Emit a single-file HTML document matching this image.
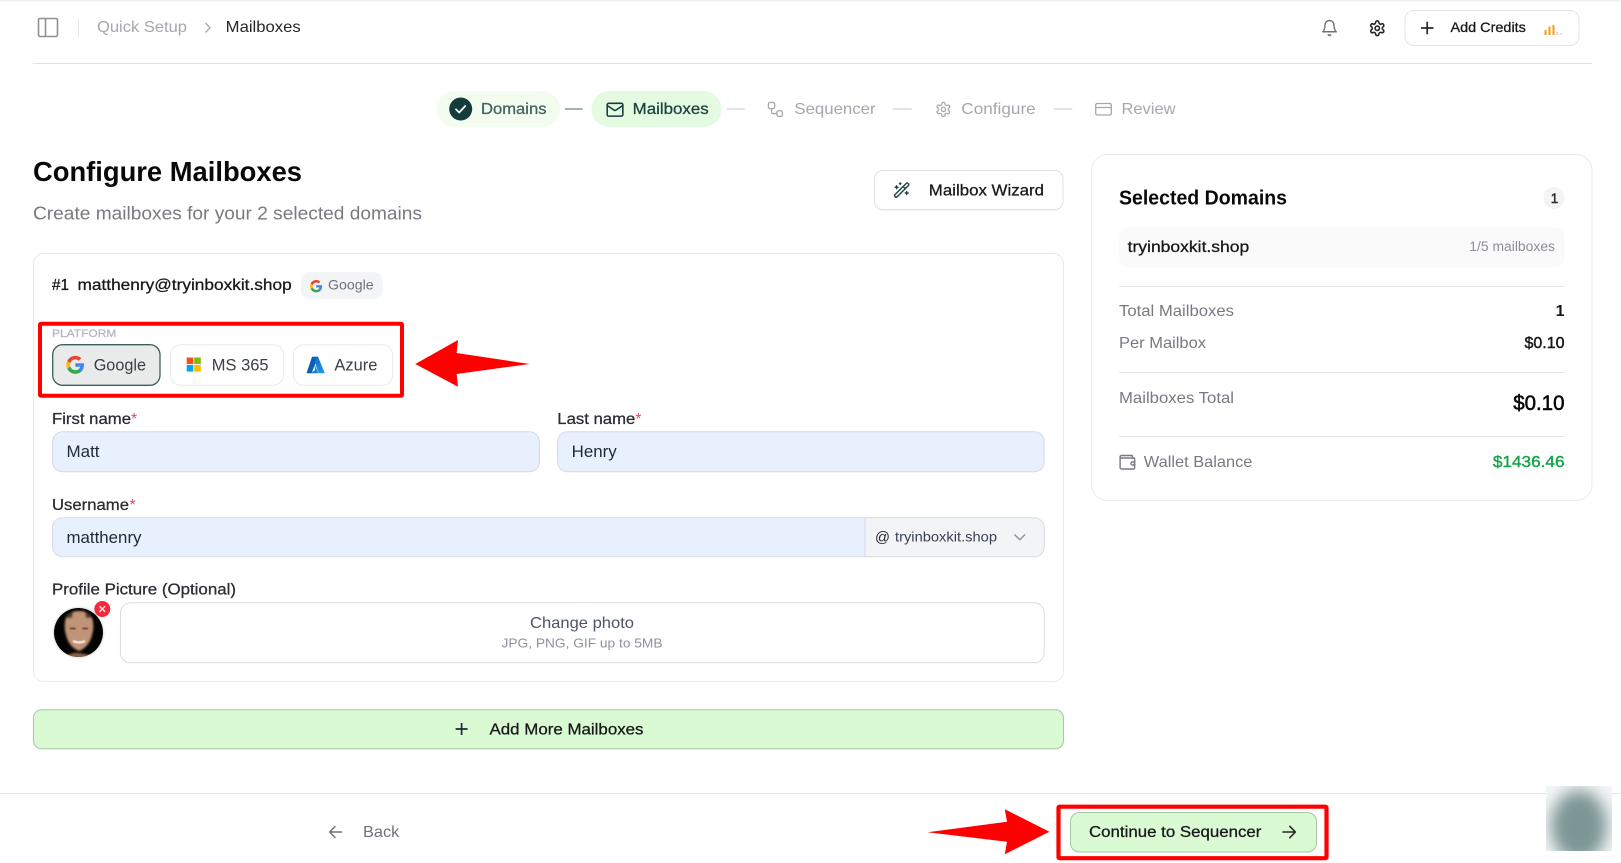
<!DOCTYPE html>
<html><head><meta charset="utf-8"><style>
html,body{margin:0;padding:0;background:#fff;width:1621px;height:863px;overflow:hidden}
svg{display:block;filter:blur(.3px)}
text{font-family:"Liberation Sans",Arial,sans-serif;font-size:16px;fill:#27272a}
.m{stroke:currentColor;stroke-width:.28px}
.b{font-weight:700}
.i{fill:none;stroke-linecap:round;stroke-linejoin:round;stroke-width:2}
</style></head><body>
<svg width="1621" height="863" viewBox="0 0 1621 863" xmlns="http://www.w3.org/2000/svg">
<defs>
<filter id="bl" x="-60%" y="-60%" width="220%" height="220%"><feGaussianBlur stdDeviation="8"/></filter>
<filter id="av" x="-20%" y="-20%" width="140%" height="140%"><feGaussianBlur stdDeviation="1"/></filter>
<filter id="av2" x="-20%" y="-20%" width="140%" height="140%"><feGaussianBlur stdDeviation=".5"/></filter>
<clipPath id="avc"><circle cx="78.5" cy="632.5" r="24.5"/></clipPath>
<clipPath id="blc"><rect x="1546" y="786" width="66" height="65"/></clipPath>
<linearGradient id="az" x1="0" y1="0" x2="0" y2="1"><stop offset="0" stop-color="#0f6cc0"/><stop offset="1" stop-color="#1f9be8"/></linearGradient>
<g id="gg"><path fill="#4285F4" d="M22.56 12.25c0-.78-.07-1.53-.2-2.25H12v4.26h5.92c-.26 1.37-1.04 2.53-2.21 3.31v2.77h3.57c2.08-1.92 3.28-4.74 3.28-8.09z"/><path fill="#34A853" d="M12 23c2.97 0 5.46-.98 7.28-2.66l-3.57-2.77c-.98.66-2.23 1.06-3.71 1.06-2.86 0-5.29-1.93-6.16-4.53H2.18v2.84C3.99 20.53 7.7 23 12 23z"/><path fill="#FBBC05" d="M5.84 14.09c-.22-.66-.35-1.36-.35-2.09s.13-1.43.35-2.09V7.07H2.18C1.43 8.55 1 10.22 1 12s.43 3.45 1.18 4.93l3.66-2.84z"/><path fill="#EA4335" d="M12 5.38c1.62 0 3.06.56 4.21 1.64l3.15-3.15C17.45 2.09 14.97 1 12 1 7.7 1 3.99 3.47 2.18 7.07l3.66 2.84c.87-2.6 3.3-4.53 6.16-4.53z"/></g>
<g id="set"><path d="M12.22 2h-.44a2 2 0 0 0-2 2v.18a2 2 0 0 1-1 1.73l-.43.25a2 2 0 0 1-2 0l-.15-.08a2 2 0 0 0-2.73.73l-.22.38a2 2 0 0 0 .73 2.73l.15.1a2 2 0 0 1 1 1.72v.51a2 2 0 0 1-1 1.74l-.15.09a2 2 0 0 0-.73 2.73l.22.38a2 2 0 0 0 2.73.73l.15-.08a2 2 0 0 1 2 0l.43.25a2 2 0 0 1 1 1.73V20a2 2 0 0 0 2 2h.44a2 2 0 0 0 2-2v-.18a2 2 0 0 1 1-1.73l.43-.25a2 2 0 0 1 2 0l.15.08a2 2 0 0 0 2.73-.73l.22-.39a2 2 0 0 0-.73-2.73l-.15-.08a2 2 0 0 1-1-1.74v-.5a2 2 0 0 1 1-1.74l.15-.09a2 2 0 0 0 .73-2.73l-.22-.38a2 2 0 0 0-2.73-.73l-.15.08a2 2 0 0 1-2 0l-.43-.25a2 2 0 0 1-1-1.73V4a2 2 0 0 0-2-2z"/><circle cx="12" cy="12" r="3"/></g>
</defs>

<!-- header -->
<rect x="0" y="0" width="1621" height="1.5" fill="#f1f1f3"/>
<rect x="38.500" y="18.500" width="19" height="18" rx="1.500" fill="none" stroke="#8f9098" stroke-width="1.600"/>
<line x1="45.500" y1="18.500" x2="45.500" y2="36.500" stroke="#8f9098" stroke-width="1.600"/>
<rect x="78" y="19" width="1" height="18" fill="#e4e4e7"/>
<text x="97" y="32" textLength="90" lengthAdjust="spacingAndGlyphs" style="fill:#a6a6ae">Quick Setup</text>
<path d="M205.500 23l4.500 4.800-4.500 4.800" fill="none" stroke="#a6a6ae" stroke-width="1.300"/>
<text x="225.700" y="32" textLength="75" lengthAdjust="spacingAndGlyphs" style="fill:#27272a">Mailboxes</text>
<rect x="33" y="63" width="1559" height="1" fill="#e4e4e7"/>

<g transform="translate(1320.500,19) scale(.75)" class="i" stroke="#71717a" style="stroke-width:1.900"><path d="M6 8a6 6 0 0 1 12 0c0 7 3 9 3 9H3s3-2 3-9"/><path d="M10.300 21a1.940 1.940 0 0 0 3.400 0"/></g>
<g transform="translate(1368.500,19.500) scale(.73)" class="i" stroke="#27272a" style="stroke-width:2.200"><use href="#set"/></g>
<rect x="1405" y="10.500" width="174" height="35" rx="9" fill="#fff" stroke="#e4e4e7"/>
<path d="M1421 28h12.500M1427.200 21.800v12.500" stroke="#27272a" stroke-width="1.700" fill="none"/>
<text x="1450.500" y="32" textLength="75.400" lengthAdjust="spacingAndGlyphs" class="m" style="font-size:14px;fill:#18181b;color:#18181b">Add Credits</text>
<g fill="#f59e0b"><rect x="1544.500" y="30" width="2" height="5"/><rect x="1548.500" y="26.500" width="2" height="8.500"/><rect x="1552.500" y="25" width="2" height="10"/><rect x="1556.500" y="32" width="1.600" height="3" fill="#cfcfd4"/><rect x="1560.500" y="33" width="1.600" height="2" fill="#dcdce0"/></g>

<!-- stepper -->
<rect x="436.500" y="91" width="123.500" height="36" rx="18" fill="#f2fdf0"/>
<circle cx="460.700" cy="109" r="11.500" fill="#143c3c"/>
<path d="M456 109.300l3.200 3.200 6-6.500" fill="none" stroke="#fff" stroke-width="1.700" stroke-linecap="round" stroke-linejoin="round"/>
<text x="481" y="114" textLength="65.500" lengthAdjust="spacingAndGlyphs" class="m" style="fill:#446260;color:#446260">Domains</text>
<rect x="565" y="108" width="17.600" height="2" fill="#9fb5ae"/>
<rect x="591.400" y="91" width="130.200" height="36" rx="18" fill="#e5fbe1"/>
<g transform="translate(606.500,100.500) scale(.71)" class="i" stroke="#143c3c" style="stroke-width:2.200"><rect x="1" y="4" width="22" height="18" rx="2"/><path d="m23 7-9.970 6.700a1.940 1.940 0 0 1-2.060 0L1 7"/></g>
<text x="632.700" y="114" textLength="76" lengthAdjust="spacingAndGlyphs" class="m" style="fill:#1c4242;color:#1c4242">Mailboxes</text>
<rect x="726.700" y="108" width="18" height="2" fill="#e4e4e7"/>
<g transform="translate(767,101) scale(.7)" class="i" stroke="#a6a6ae" style="stroke-width:1.800"><rect x="2" y="2" width="9" height="9" rx="2.500"/><path d="M6.500 11v5a2 2 0 0 0 2 2h6"/><rect x="14" y="14" width="8" height="8" rx="2.500"/></g>
<text x="794.400" y="114" textLength="81.200" lengthAdjust="spacingAndGlyphs" style="fill:#a6a6ae">Sequencer</text>
<rect x="892.600" y="108" width="19" height="2" fill="#e4e4e7"/>
<g transform="translate(935,101) scale(.7)" class="i" stroke="#a6a6ae" style="stroke-width:1.800"><use href="#set"/></g>
<text x="961.300" y="114" textLength="74.400" lengthAdjust="spacingAndGlyphs" style="fill:#a6a6ae">Configure</text>
<rect x="1054" y="108" width="18.400" height="2" fill="#e4e4e7"/>
<g class="i" stroke="#a6a6ae" style="stroke-width:1.300"><rect x="1095.700" y="103.500" width="15.600" height="11.500" rx="1.500"/><path d="M1095.700 107.500h15.600"/></g>
<text x="1121.500" y="114" textLength="54" lengthAdjust="spacingAndGlyphs" style="fill:#a6a6ae">Review</text>

<!-- title -->
<text x="33" y="181" textLength="269" lengthAdjust="spacingAndGlyphs" class="b" style="font-size:27.500px;fill:#09090b">Configure Mailboxes</text>
<text x="33" y="219.500" textLength="389" lengthAdjust="spacingAndGlyphs" style="font-size:18px;fill:#797982">Create mailboxes for your 2 selected domains</text>

<rect x="874.500" y="170.500" width="188.500" height="39" rx="8" fill="#000" opacity=".06" transform="translate(0,1)"/>
<rect x="874.500" y="170.500" width="188.500" height="39" rx="8" fill="#fff" stroke="#e1e1e5"/>
<g transform="translate(893,181.500) scale(.72)" class="i" stroke="#214545" style="stroke-width:2"><path d="m21.640 3.640-1.280-1.280a1.210 1.210 0 0 0-1.720 0L2.360 18.640a1.210 1.210 0 0 0 0 1.720l1.280 1.280a1.200 1.200 0 0 0 1.720 0L21.640 5.360a1.200 1.200 0 0 0 0-1.720"/><path d="m14 7 3 3"/><path d="M5 6v4"/><path d="M19 14v4"/><path d="M10 2v2"/><path d="M7 8H3"/><path d="M21 16h-4"/><path d="M11 3H9"/></g>
<text x="928.800" y="195.500" textLength="115.200" lengthAdjust="spacingAndGlyphs" class="m" style="fill:#18181b;color:#18181b">Mailbox Wizard</text>

<!-- left card -->
<rect x="33.500" y="253.500" width="1030" height="428" rx="10" fill="#fff" stroke="#e9e9ec"/>
<text x="52" y="290" textLength="17" lengthAdjust="spacingAndGlyphs" class="m" style="fill:#18181b;color:#18181b">#1</text>
<text x="77.500" y="290" textLength="214.200" lengthAdjust="spacingAndGlyphs" class="m" style="fill:#18181b;color:#18181b">matthenry@tryinboxkit.shop</text>
<rect x="301" y="272.300" width="81.600" height="26.400" rx="8" fill="#f3f4f6"/>
<g transform="translate(309.500,279.500) scale(.56)"><use href="#gg"/></g>
<text x="328" y="289.500" textLength="45.600" lengthAdjust="spacingAndGlyphs" style="font-size:14px;fill:#6b7280">Google</text>

<text x="52" y="337" textLength="64.400" lengthAdjust="spacingAndGlyphs" style="font-size:11px;fill:#b4b7c4;color:#b4b7c4" class="m">PLATFORM</text>

<rect x="52.700" y="344.700" width="107.300" height="40.600" rx="10" fill="#e8ebe9" stroke="#3f5f5c" stroke-width="1.300"/>
<g transform="translate(65.500,355) scale(.82)"><use href="#gg"/></g>
<text x="93.700" y="370.500" textLength="52.300" lengthAdjust="spacingAndGlyphs" style="fill:#3a404a;font-size:16.500px">Google</text>
<rect x="170.500" y="344.800" width="112.900" height="40.400" rx="10" fill="#fff" stroke="#eaeaed"/>
<rect x="186.700" y="357.500" width="6.600" height="6.600" fill="#f25022"/><rect x="194.200" y="357.500" width="6.600" height="6.600" fill="#7fba00"/><rect x="186.700" y="365" width="6.600" height="6.600" fill="#00a4ef"/><rect x="194.200" y="365" width="6.600" height="6.600" fill="#ffb900"/>
<text x="211.800" y="370.500" textLength="56.800" lengthAdjust="spacingAndGlyphs" style="fill:#3a404a;font-size:16.500px">MS 365</text>
<rect x="293.500" y="344.800" width="99.100" height="40.400" rx="10" fill="#fff" stroke="#eaeaed"/>
<path d="M312 356.800h6l-6.500 16.500h-5z" fill="#0a5fb4"/><path d="M314 356.800h4l6.800 16.500h-6.300l-2.300-6.700z" fill="url(#az)"/><path d="M314.500 364l3.800 9.300h-8.300l5-3.200z" fill="#1a7fd0"/>
<text x="334.400" y="370.500" textLength="43" lengthAdjust="spacingAndGlyphs" style="fill:#3a404a;font-size:16.500px">Azure</text>

<rect x="40" y="323.700" width="362" height="72" fill="none" stroke="#ff0000" stroke-width="4" rx="1"/>
<path d="M415.300 364L458 340 456.600 353 529.600 364 456.600 374 458 386.700Z" fill="#ff0000"/>

<text x="52" y="424" textLength="79" lengthAdjust="spacingAndGlyphs" class="m" style="fill:#2c2c33;color:#2c2c33">First name</text>
<text x="131" y="424" style="fill:#f43f5e">*</text>
<rect x="52.500" y="431.800" width="487" height="40" rx="10" fill="#e8f0fe" stroke="#d6dae3"/>
<text x="66.500" y="457" textLength="33" lengthAdjust="spacingAndGlyphs" style="fill:#1f2937;font-size:16.500px">Matt</text>

<text x="557.300" y="424" textLength="78" lengthAdjust="spacingAndGlyphs" class="m" style="fill:#2c2c33;color:#2c2c33">Last name</text>
<text x="635.300" y="424" style="fill:#f43f5e">*</text>
<rect x="557.500" y="431.800" width="486.700" height="40" rx="10" fill="#e8f0fe" stroke="#d6dae3"/>
<text x="571.700" y="457" textLength="45" lengthAdjust="spacingAndGlyphs" style="fill:#1f2937;font-size:16.500px">Henry</text>

<text x="52" y="510" textLength="77" lengthAdjust="spacingAndGlyphs" class="m" style="fill:#2c2c33;color:#2c2c33">Username</text>
<text x="129.500" y="510" style="fill:#f43f5e">*</text>
<rect x="52.500" y="517.800" width="991.700" height="39" rx="10" fill="#f3f4f6" stroke="#d6dae3"/>
<path d="M865 518.300H62a9.500 9.500 0 0 0-9 9.500v19a9.500 9.500 0 0 0 9 9.500H865z" fill="#e8f0fe"/>
<line x1="865" y1="518" x2="865" y2="556.500" stroke="#d6dae3"/>
<text x="66.500" y="543" textLength="75" lengthAdjust="spacingAndGlyphs" style="fill:#1f2937;font-size:16.500px">matthenry</text>
<text x="875" y="542" textLength="15" lengthAdjust="spacingAndGlyphs" style="font-size:14.500px;fill:#27272a">@</text>
<text x="895" y="541.500" textLength="102" lengthAdjust="spacingAndGlyphs" style="font-size:14px;fill:#374151">tryinboxkit.shop</text>
<path d="M1014.500 534.500l5.300 5.200 5.300-5.200" fill="none" stroke="#8b8f98" stroke-width="1.400"/>

<text x="52" y="594.500" textLength="184" lengthAdjust="spacingAndGlyphs" class="m" style="fill:#2c2c33;color:#2c2c33">Profile Picture (Optional)</text>

<circle cx="78.500" cy="632.500" r="26" fill="#ecebee"/>
<g clip-path="url(#avc)"><rect x="50" y="604" width="58" height="58" fill="#040303"/>
<g filter="url(#av)">
<path d="M65 622q1-11 14-11t14 11q1 7-1 13q-3 12-13 16q-10-4-13-16q-2-6-1-13z" fill="#c19478"/>
<path d="M66 618q3-6 7-6l-1 6zM92 618q-3-6-7-6l1 6z" fill="#4a3427"/>
<path d="M68 655q5-3 11-2t11 2l3 6H66z" fill="#8c6148"/>
</g>
<g filter="url(#av2)">
<path d="M70 628.500h5.500M82.500 628.500h5.500" stroke="#4f3a2e" stroke-width="1.500" fill="none"/>
<path d="M73 641q6 3 12 0" fill="none" stroke="#f7efe8" stroke-width="2.200"/>
</g></g>
<circle cx="102.300" cy="609" r="8" fill="#f5283e"/>
<path d="M99.500 606.200l5.600 5.600M105.100 606.200l-5.600 5.600" stroke="#fbd7da" stroke-width="1.500"/>

<rect x="120.500" y="602.800" width="923.700" height="60" rx="10" fill="#fff" stroke="#d9dce5"/>
<text x="582" y="628" text-anchor="middle" textLength="104" lengthAdjust="spacingAndGlyphs" style="fill:#4b5563">Change photo</text>
<text x="582" y="647.500" text-anchor="middle" textLength="161" lengthAdjust="spacingAndGlyphs" style="font-size:13px;fill:#8e929b">JPG, PNG, GIF up to 5MB</text>

<rect x="33.500" y="709.800" width="1030" height="39" rx="8" fill="#d9fad3" stroke="#a5c7a3"/>
<path d="M455.600 729h12M461.600 723v12" stroke="#1f2937" stroke-width="1.700" fill="none"/>
<text x="489.500" y="734.500" textLength="154" lengthAdjust="spacingAndGlyphs" class="m" style="fill:#18181b;color:#18181b">Add More Mailboxes</text>

<!-- right card -->
<rect x="1091.500" y="154.500" width="500.500" height="346" rx="16" fill="#fff" stroke="#e9e9ec"/>
<text x="1119" y="204.500" textLength="168" lengthAdjust="spacingAndGlyphs" class="b" style="font-size:20px;fill:#09090b">Selected Domains</text>
<ellipse cx="1554" cy="198" rx="10.500" ry="11" fill="#f4f4f5"/>
<text x="1554.500" y="203" text-anchor="middle" class="m" style="font-size:13.500px;fill:#27272a;color:#27272a;stroke-width:.45px">1</text>
<rect x="1119" y="227.300" width="445.500" height="40.400" rx="10" fill="#fafafa"/>
<text x="1127.600" y="252" textLength="121.700" lengthAdjust="spacingAndGlyphs" class="m" style="fill:#18181b;color:#18181b">tryinboxkit.shop</text>
<text x="1469.300" y="251" textLength="85.700" lengthAdjust="spacingAndGlyphs" style="font-size:13.500px;fill:#8d8d96">1/5 mailboxes</text>
<rect x="1119" y="286" width="445.500" height="1" fill="#e4e4e7"/>
<text x="1119" y="316" textLength="115" lengthAdjust="spacingAndGlyphs" style="fill:#797982">Total Mailboxes</text>
<text x="1564.500" y="316" text-anchor="end" class="b" style="fill:#18181b">1</text>
<text x="1524.500" y="348" textLength="40" lengthAdjust="spacingAndGlyphs" class="m" style="fill:#18181b;color:#18181b;stroke-width:.45px">$0.10</text>
<text x="1119" y="348" textLength="87" lengthAdjust="spacingAndGlyphs" style="fill:#797982">Per Mailbox</text>
<rect x="1119" y="372" width="445.500" height="1" fill="#e4e4e7"/>
<text x="1119" y="403" textLength="115" lengthAdjust="spacingAndGlyphs" style="fill:#797982">Mailboxes Total</text>
<text x="1513.200" y="410" textLength="51.300" lengthAdjust="spacingAndGlyphs" class="m" style="font-size:21px;fill:#09090b;color:#09090b;stroke-width:.55px">$0.10</text>
<rect x="1119" y="436" width="445.500" height="1" fill="#e4e4e7"/>
<g class="i" stroke="#797982" style="stroke-width:1.400"><path d="M1132.500 458.500v-2a1 1 0 0 0-1-1h-10a1.500 1.500 0 0 0-1.400 1.500v10.500a1.500 1.500 0 0 0 1.500 1.500h12a1 1 0 0 0 1-1v-9a1 1 0 0 0-1-1h-13"/><path d="M1135 462h-2.500a1.500 1.500 0 0 0 0 3h2.500"/></g>
<text x="1143.800" y="467" textLength="108.600" lengthAdjust="spacingAndGlyphs" style="fill:#797982">Wallet Balance</text>
<text x="1492.900" y="467" textLength="71.600" lengthAdjust="spacingAndGlyphs" class="m" style="fill:#16a34a;color:#16a34a;stroke-width:.4px">$1436.46</text>

<!-- footer -->
<rect x="0" y="793" width="1621" height="1" fill="#e4e4e7"/>
<path d="M341.500 832h-11.500M335 826.500l-5.300 5.500 5.300 5.500" fill="none" stroke="#71717a" stroke-width="1.500" stroke-linecap="round" stroke-linejoin="round"/>
<text x="363" y="837" textLength="36.300" lengthAdjust="spacingAndGlyphs" style="fill:#71717a">Back</text>

<path d="M927.600 832.300L1007 821.700 1004.800 809.300 1049.400 831.700 1004.800 854.300 1007 841.700Z" fill="#ff0000"/>
<rect x="1058.500" y="806.700" width="268" height="51.500" fill="none" stroke="#ff0000" stroke-width="4.200" rx="1"/>
<rect x="1070.500" y="812.500" width="246" height="39.500" rx="9" fill="#d9fad3" stroke="#a5c7a3"/>
<text x="1089" y="837" textLength="172.400" lengthAdjust="spacingAndGlyphs" class="m" style="fill:#18181b;color:#18181b">Continue to Sequencer</text>
<path d="M1283 832h12M1289.800 826.300l5.600 5.700-5.600 5.700" fill="none" stroke="#27272a" stroke-width="1.600" stroke-linecap="round" stroke-linejoin="round"/>

<g clip-path="url(#blc)"><rect x="1546" y="786" width="66" height="65" fill="#f4f6f6"/><ellipse cx="1579" cy="826" rx="28" ry="36" fill="#7d9595" filter="url(#bl)"/></g>
</svg>
</body></html>
